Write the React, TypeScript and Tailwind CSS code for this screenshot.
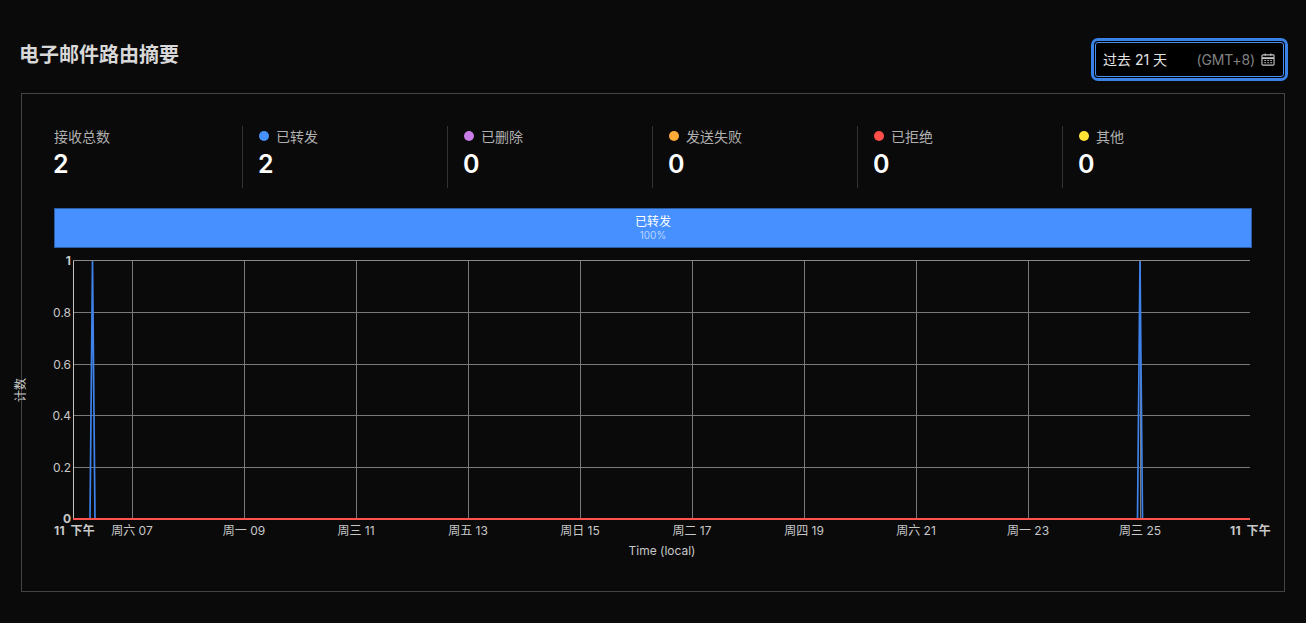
const stats = [
  { label: "接收总数", value: "2", color: "" },
  { label: "已转发", value: "2", color: "bg-[#4690ff]" },
  { label: "已删除", value: "0", color: "bg-[#c77ce6]" },
  { label: "发送失败", value: "0", color: "bg-[#ffab38]" },
  { label: "已拒绝", value: "0", color: "bg-[#ff4f4a]" },
  { label: "其他", value: "0", color: "bg-[#ffe234]" },
];

const gridX = [132, 244, 356, 468, 580, 692, 804, 916, 1028, 1140];
const xLabels = ["周六 07", "周一 09", "周三 11", "周五 13", "周日 15", "周二 17", "周四 19", "周六 21", "周一 23", "周三 25"];
const gridY: [number, string][] = [
  [312.5, "0.8"],
  [364.5, "0.6"],
  [415.5, "0.4"],
  [467.5, "0.2"],
];

function Chart() {
  return (
    <svg width="1306" height="320" viewBox="0 248 1306 320" className="block -ml-[54px]" fontFamily="Inter, 'Noto Sans CJK SC', sans-serif">
      {gridX.map((x) => (
        <line key={x} x1={x + 0.5} x2={x + 0.5} y1="261" y2="519" stroke="#7a7a7a" />
      ))}
      <line x1="73" x2="1250" y1="260.5" y2="260.5" stroke="#8a8a8a" />
      {gridY.map(([y]) => (
        <line key={y} x1="73" x2="1250" y1={y} y2={y} stroke="#7a7a7a" />
      ))}
      <line x1="73.5" x2="73.5" y1="261" y2="519" stroke="#c4c4c4" />
      <path d="M90 519 L92.5 261 L95 519" fill="none" stroke="#3f82ea" strokeWidth="1.7" />
      <path d="M1137.5 519 L1140 261 L1142.5 519" fill="none" stroke="#3f82ea" strokeWidth="1.7" />
      <line x1="73" x2="1250" y1="519" y2="519" stroke="#ff524a" strokeWidth="2" />
      <text x="71" y="265" textAnchor="end" fontSize="12" fontWeight="700" fill="#c8c8c8">1</text>
      {gridY.map(([y, t]) => (
        <text key={t} x="71" y={y + 4} textAnchor="end" fontSize="12" fill="#c8c8c8">{t}</text>
      ))}
      <text x="71" y="523" textAnchor="end" fontSize="12" fontWeight="700" fill="#c8c8c8">0</text>
      <text x="54" y="534.5" textAnchor="start" fontSize="12" fontWeight="700" wordSpacing="2" letterSpacing="0.4" fill="#c8c8c8">11 下午</text>
      {gridX.map((x, i) => (
        <text key={x} x={x} y="534.5" textAnchor="middle" fontSize="12" fill="#c8c8c8">{xLabels[i]}</text>
      ))}
      <text x="1230" y="534.5" textAnchor="start" fontSize="12" fontWeight="700" wordSpacing="2" letterSpacing="0.4" fill="#c8c8c8">11 下午</text>
      <text x="662" y="554.5" textAnchor="middle" fontSize="12" fill="#c8c8c8">Time (local)</text>
      <text x="0" y="0" transform="translate(25 390) rotate(-90)" textAnchor="middle" fontSize="12" fill="#c8c8c8">计数</text>
    </svg>
  );
}

export default function App() {
  return (
    <div
      className="w-[1306px] h-[623px] overflow-hidden bg-[#0a0a0a] px-[21px] pt-[38px]"
      style={{ fontFamily: "Inter, 'Noto Sans CJK SC', sans-serif" }}
    >
      <div className="flex items-start justify-between h-[55px]">
        <h1 className="text-[20px] leading-[34px] font-bold text-[#d8d8d8] -ml-[2px]">电子邮件路由摘要</h1>
        <div className="mr-[-3px] ml-auto w-[197px] h-[43px] p-[3px] rounded-[7px] bg-[#3a82e6]">
          <div className="h-full p-px rounded-[4px] bg-black">
            <div className="h-full border border-[#4a90f0] rounded-[3px] bg-black flex items-center pl-[7px] pr-[8px] justify-between">
              <span className="text-[14px] text-[#e6e6e6]">过去 21 天</span>
              <span className="flex items-center gap-[6px]">
                <span className="text-[14px] tracking-[-0.1px] text-[#808080]">(GMT+8)</span>
                <svg width="14" height="13" viewBox="0 0 15 14" fill="none" stroke="#c4c4c4" strokeWidth="1.2">
                  <rect x="1" y="2" width="13" height="11" rx="1" />
                  <path d="M1 5.5h13" strokeWidth="2" />
                  <path d="M4.5 0.5v2.5M10.5 0.5v2.5" />
                  <path d="M3.5 8h2M6.7 8h2M9.9 8h2M3.5 10.5h2M6.7 10.5h2M9.9 10.5h2" strokeWidth="1" />
                </svg>
              </span>
            </div>
          </div>
        </div>
      </div>

      <div className="w-[1264px] h-[499px] border border-[#444444] px-[32px] pt-[32px]">
        <div className="flex h-[62px]">
          {stats.map((s, i) => (
            <div
              key={s.label}
              className={i === 0 ? "w-[188px] shrink-0" : "w-[205px] shrink-0 border-l border-[#333333] pl-[16px]"}
            >
              <div className="flex items-center gap-[7px] h-[22px] -mt-px">
                {s.color && <span className={`w-[10px] h-[10px] rounded-full ${s.color}`} />}
                <span className="text-[14px] text-[#b0b0b0]">{s.label}</span>
              </div>
              <div className="text-[25px] leading-[34px] font-semibold text-white -ml-px">{s.value}</div>
            </div>
          ))}
        </div>

        <div className="mt-[20px] w-[1198px] h-[40px] bg-[#4690ff] border border-[#2c5ea8] flex flex-col items-center justify-center">
          <span className="text-[12px] leading-[14px] text-white">已转发</span>
          <span className="text-[10px] leading-[12px] text-[#b9d5ff]">100%</span>
        </div>

        <Chart />
      </div>
    </div>
  );
}
